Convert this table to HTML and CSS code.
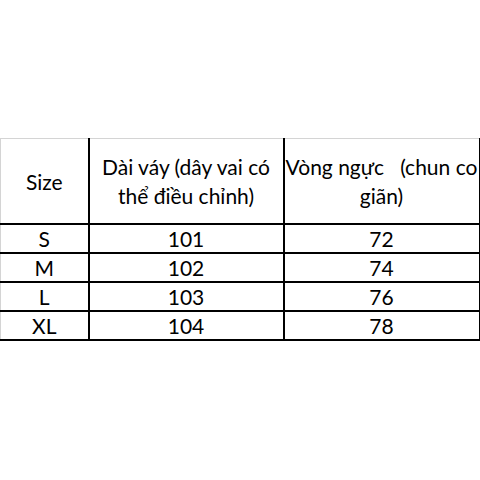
FILE: index.html
```html
<!DOCTYPE html>
<html lang="vi">
<head>
<meta charset="utf-8">
<link rel="stylesheet" href="styles.css">
</head>
<body>
<div class="page">
  <table class="sizes">
    <colgroup>
      <col class="c1"><col class="c2"><col class="c3">
    </colgroup>
    <tr class="head">
      <td>Size</td>
      <td>Dài váy (dây vai có<br>thể điều chỉnh)</td>
      <td><span class="pre">Vòng ngực   (chun co</span><br>giãn)</td>
    </tr>
    <tr><td>S</td><td>101</td><td>72</td></tr>
    <tr><td>M</td><td>102</td><td>74</td></tr>
    <tr><td>L</td><td>103</td><td>76</td></tr>
    <tr><td>XL</td><td>104</td><td>78</td></tr>
  </table>
</div>
</body>
</html>
```
FILE: styles.css
```css
html, body { margin: 0; padding: 0; background: #fff; }
.page {
  width: 480px;
  height: 480px;
  display: flex;
  align-items: center;
  justify-content: flex-start;
}
.sizes {
  border-collapse: collapse;
  table-layout: fixed;
  width: 479px;
  margin-top: -1px;
  font-family: Lato, "Noto Sans", sans-serif;
  font-size: 21px;
  color: #000;
  border-top: 1px solid #d4d4d4;
  border-left: 1px solid #d4d4d4;
}
.c1 { width: 88px; }
.c2 { width: 195px; }
.c3 { width: 196px; }
.sizes td {
  border: 2px solid #000;
  text-align: center;
  vertical-align: middle;
  padding: 0;
  height: 27px;
  line-height: 27px;
}
.sizes tr:first-child td { border-top: 1px solid #d4d4d4; }
.sizes td:first-child { border-left: 1px solid #d4d4d4; }
.sizes .head td { height: 84px; line-height: 29px; }
.pre { white-space: pre; }
```
